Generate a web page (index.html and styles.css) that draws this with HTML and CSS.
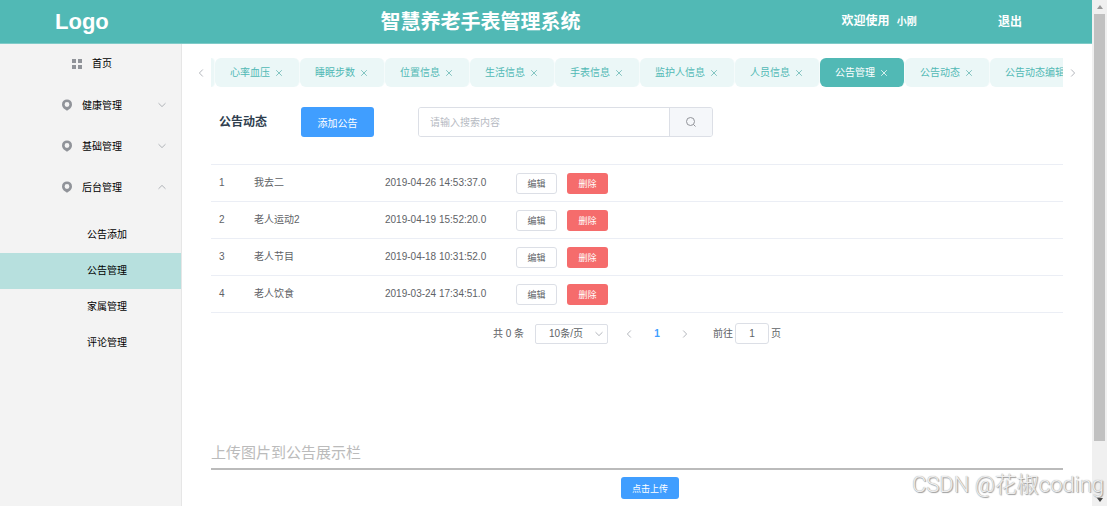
FILE: index.html
```html
<!DOCTYPE html>
<html lang="zh-CN">
  <head>
    <meta charset="utf-8">
    <meta name="viewport" content="width=device-width, initial-scale=1">
    <title>智慧养老手表管理系统</title>
    <link rel="stylesheet" href="styles.css">
  </head>
  <body>
    <svg class="sprite" width="0" height="0" aria-hidden="true">
      <symbol id="down" viewBox="0 0 10 10"><path d="M1.5 3.2 5 6.6 8.5 3.2" fill="none" stroke="currentColor"/></symbol>
      <symbol id="up" viewBox="0 0 10 10"><path d="M1.5 6.8 5 3.4 8.5 6.8" fill="none" stroke="currentColor"/></symbol>
      <symbol id="left" viewBox="0 0 10 10"><path d="M6.8 1.5 3.4 5 6.8 8.5" fill="none" stroke="currentColor"/></symbol>
      <symbol id="right" viewBox="0 0 10 10"><path d="M3.2 1.5 6.6 5 3.2 8.5" fill="none" stroke="currentColor"/></symbol>
      <symbol id="close" viewBox="0 0 10 10"><path d="M2.200 2.200 7.800 7.800M7.800 2.200 2.200 7.800" fill="none" stroke="currentColor"/></symbol>
      <symbol id="pin" viewBox="0 0 12 12"><path fill="currentColor" fill-rule="evenodd" d="M6 .4a5 5 0 0 1 5 5c0 2.100-1.300 3.700-2.900 4.800L6 11.800l-2.100-1.600C2.300 9.100 1 7.500 1 5.400a5 5 0 0 1 5-5zm0 2.700a2.400 2.400 0 1 0 0 4.800 2.400 2.400 0 0 0 0-4.800z"/></symbol>
      <symbol id="grid" viewBox="0 0 12 12"><path fill="currentColor" d="M1 1h4v4H1zM7 1h4v4H7zM1 7h4v4H1zM7 7h4v4H7z"/></symbol>
      <symbol id="search" viewBox="0 0 12 12"><path d="M5.500 1.500a4 4 0 1 1 0 8 4 4 0 0 1 0-8zM8.500 8.500l2 2" fill="none" stroke="currentColor"/></symbol>
    </svg>
    <div class="screen">
      <div class="app">
        <header class="header">
          <div class="logo">Logo</div>
          <h1 class="title">智慧养老手表管理系统</h1>
          <div class="user">欢迎使用 <span class="name">小刚</span></div>
          <div class="exit"><a href="#">退出</a></div>
        </header>
        <div class="wrap">
          <nav class="side">
            <a class="item home" href="#"><svg class="icon"><use href="#grid"/></svg>首页</a>
            <button class="item"><svg class="icon"><use href="#pin"/></svg>健康管理<svg class="arrow"><use href="#down"/></svg></button>
            <button class="item"><svg class="icon"><use href="#pin"/></svg>基础管理<svg class="arrow"><use href="#down"/></svg></button>
            <button class="item"><svg class="icon"><use href="#pin"/></svg>后台管理<svg class="arrow"><use href="#up"/></svg></button>
            <div class="sub">
              <a href="#">公告添加</a>
              <a class="on" href="#">公告管理</a>
              <a href="#">家属管理</a>
              <a href="#">评论管理</a>
            </div>
          </nav>
          <main class="main">
            <div class="tabs">
              <button class="tabs_btn" aria-label="向左"><svg class="small"><use href="#left"/></svg></button>
              <div class="tabs_list">
                <span class="tab tab_end"></span>
                <a class="tab" href="#">心率血压<svg class="x"><use href="#close"/></svg></a>
                <a class="tab" href="#">睡眠步数<svg class="x"><use href="#close"/></svg></a>
                <a class="tab" href="#">位置信息<svg class="x"><use href="#close"/></svg></a>
                <a class="tab" href="#">生活信息<svg class="x"><use href="#close"/></svg></a>
                <a class="tab" href="#">手表信息<svg class="x"><use href="#close"/></svg></a>
                <a class="tab" href="#">监护人信息<svg class="x"><use href="#close"/></svg></a>
                <a class="tab" href="#">人员信息<svg class="x"><use href="#close"/></svg></a>
                <a class="tab active" href="#">公告管理<svg class="x"><use href="#close"/></svg></a>
                <a class="tab" href="#">公告动态<svg class="x"><use href="#close"/></svg></a>
                <a class="tab" href="#">公告动态编辑<svg class="x"><use href="#close"/></svg></a>
              </div>
              <button class="tabs_btn" aria-label="向右"><svg class="small"><use href="#right"/></svg></button>
            </div>
            <div class="content">
              <div class="tools">
                <h2>公告动态</h2>
                <button class="btn add">添加公告</button>
                <form class="search">
                  <input type="text" placeholder="请输入搜索内容" aria-label="请输入搜索内容">
                  <button type="button" aria-label="搜索"><svg class="icon"><use href="#search"/></svg></button>
                </form>
              </div>
              <table class="table">
                <tbody>
                  <tr><td class="c_id">1</td><td class="c_name">我去二</td><td class="c_date">2019-04-26 14:53:37.0</td><td><div class="ops"><button class="btn edit">编辑</button><button class="btn del">删除</button></div></td></tr>
                  <tr><td>2</td><td>老人运动2</td><td>2019-04-19 15:52:20.0</td><td><div class="ops"><button class="btn edit">编辑</button><button class="btn del">删除</button></div></td></tr>
                  <tr><td>3</td><td>老人节目</td><td>2019-04-18 10:31:52.0</td><td><div class="ops"><button class="btn edit">编辑</button><button class="btn del">删除</button></div></td></tr>
                  <tr><td>4</td><td>老人饮食</td><td>2019-03-24 17:34:51.0</td><td><div class="ops"><button class="btn edit">编辑</button><button class="btn del">删除</button></div></td></tr>
                </tbody>
              </table>
              <div class="pages">
                <span>共 0 条</span>
                <div class="size">
                  <select aria-label="每页条数"><option>10条/页</option></select>
                  <svg class="size_arrow small"><use href="#down"/></svg>
                </div>
                <div class="pager">
                  <button aria-label="上一页"><svg class="small"><use href="#left"/></svg></button>
                  <button class="now">1</button>
                  <button aria-label="下一页"><svg class="small"><use href="#right"/></svg></button>
                </div>
                <label class="jump">前往<input type="text" value="1">页</label>
              </div>
              <h3 class="up_title">上传图片到公告展示栏</h3>
              <div class="up"><button class="btn up_btn">点击上传</button></div>
            </div>
          </main>
        </div>
      </div>
      <div class="bar">
        <svg class="bar_arrow" viewBox="0 0 6 4"><path d="M0 4 3 0l3 4z"/></svg>
        <div class="thumb"></div>
        <svg class="bar_arrow dark" viewBox="0 0 6 4"><path d="M0 0h6L3 4z"/></svg>
      </div>
      <div class="mark">CSDN @花椒coding</div>
    </div>
  </body>
</html>
```

FILE: styles.css
```css
* {
  margin: 0;
  padding: 0;
  box-sizing: border-box;
}
body, button, input, select {
  font-family: "Liberation Sans", "Noto Sans CJK SC", sans-serif;
  font-size: 10px;
}
body {background: #fff;color: #606266;line-height: 16px;}
a {color: inherit;text-decoration: none;}
button {border: none;background: none;cursor: pointer;}
input, select {outline: none;}
.sprite {position: absolute;}
.screen {position: relative;display: flex;height: 100vh;overflow: hidden;}
.app {flex: 1;min-width: 0;display: flex;flex-direction: column;}

.header {display: flex;align-items: center;height: 44px;background: #51b9b5;border-bottom: 1px solid #7fcbc8;color: #fff;font-weight: bold;text-align: center;}
.logo {width: 15%;font-size: 22px;}
.title {width: 58%;font-size: 20px;line-height: 28px;}
.user {width: 15%;font-size: 12px;}
.name {margin-left: 4px;font-size: 10px;}
.exit {width: 9%;font-size: 12px;}

.wrap {flex: 1;display: flex;min-height: 0;}
.side {flex: none;width: 182px;background: #f3f3f3;border-right: 1px solid #e6e6e6;color: #000;}
.item {display: flex;align-items: center;gap: 9px;width: 100%;height: 41px;padding: 0 14px 0 61px;color: #000;}
.home {height: 40px;padding-left: 71px;}
.icon {width: 12px;height: 12px;color: #909399;}
.arrow {width: 10px;height: 10px;margin-left: auto;color: #b0b3b8;}
.small {width: 10px;height: 10px;color: #b4b7bd;}
.sub {padding-top: 10px;}
.sub a {display: block;padding-left: 87px;line-height: 36px;}
.sub .on {background: #b7e0de;}

.main {flex: 1;min-width: 0;padding: 14px 9px 0;}
.tabs {display: flex;height: 29px;}
.tabs_btn {display: flex;align-items: center;justify-content: center;flex: none;width: 20px;}
.tabs_list {flex: 1;display: flex;min-width: 0;overflow: hidden;}
.tab {flex: none;display: flex;align-items: center;gap: 4px;height: 29px;padding: 0 15px;border-right: 1px solid #f5fbfb;border-radius: 6px;background: #ebf7f7;color: #51b9b5;}
.tab_end {width: 4px;padding: 0;border-radius: 0 6px 6px 0;}
.x {width: 10px;height: 10px;color: #83c5c2;}
.active {background: #51b9b5;color: #fff;}
.active .x {color: #d5efed;}

.content {padding: 20px 20px 0;}
.tools {display: flex;align-items: center;padding-left: 8px;}
.tools h2 {width: 82px;font-size: 12px;color: #303f4f;}
.btn {border-radius: 3px;color: #fff;}
.add {width: 73px;height: 30px;background: #409eff;}
.search {display: flex;width: 35%;height: 30px;margin-left: 44px;border: 1px solid #dcdfe6;border-radius: 3px;overflow: hidden;}
.search input {flex: 1;min-width: 0;padding: 0 11px;border: none;}
.search input::placeholder {color: #b6bac2;}
.search button {display: flex;align-items: center;justify-content: center;width: 43px;border-left: 1px solid #dcdfe6;background: #f5f7fa;}

.table {width: 100%;margin-top: 27px;border-collapse: collapse;border-top: 1px solid #ebeef5;table-layout: fixed;}
.table td {height: 37px;padding-left: 8px;border-bottom: 1px solid #ebeef5;}
.table .c_id {width: 35px;}
.table .c_name, .table .c_date {width: 131px;}
.ops {display: flex;gap: 10px;}
.ops .btn {width: 41px;height: 21px;font-size: 9px;}
.edit {border: 1px solid #dcdfe6;background: #fff;color: #606266;}
.del {background: #f56c6c;}

.pages {display: flex;justify-content: center;align-items: center;margin-top: 10px;}
.size {position: relative;margin: 0 7px 0 11px;}
.size select {width: 73px;height: 20px;padding-left: 13px;border: 1px solid #dcdfe6;border-radius: 2px;background: #fff;color: #606266;appearance: none;}
.size_arrow {position: absolute;top: 5px;right: 4px;}
.pager {display: flex;margin-right: 14px;}
.pager button {display: flex;align-items: center;justify-content: center;width: 28px;height: 20px;}
.pager .now {color: #409eff;font-weight: bold;}
.jump {display: flex;align-items: center;gap: 2px;}
.jump input {width: 34px;height: 21px;border: 1px solid #dcdfe6;border-radius: 3px;color: #606266;text-align: center;}

.up_title {margin-top: 97px;padding-bottom: 3px;border-bottom: 2px solid #bbb;font-size: 15px;line-height: 24px;font-weight: normal;color: #bbb;}
.up {display: flex;justify-content: center;margin-top: 7px;padding-left: 26px;}
.up_btn {width: 58px;height: 22px;background: #409eff;font-size: 9px;}

.bar {display: flex;flex-direction: column;align-items: center;width: 15px;padding: 5px 2px 4px;background: #f0f0f0;}
.bar_arrow {flex: none;width: 6px;height: 4px;fill: #999;}
.dark {margin-top: auto;fill: #444;}
.thumb {width: 11px;height: 86%;margin-top: 5px;background: #c1c1c1;}
.mark {position: absolute;right: 3px;bottom: 6px;font-family: Roboto, "Noto Sans CJK SC", sans-serif;font-size: 22px;font-weight: 300;line-height: 30px;color: #eee;text-shadow: 1px 1px 1px #999, 0 0 1px #999;}
```
